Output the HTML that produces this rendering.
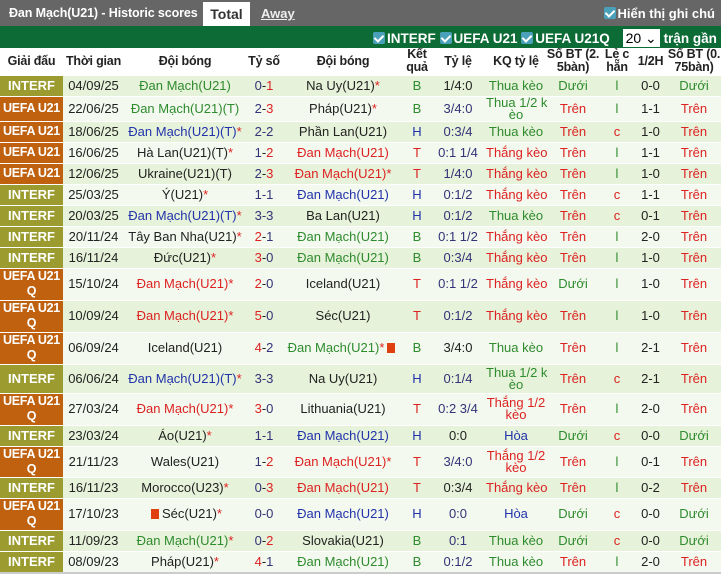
<!DOCTYPE html>
<html><head><meta charset="utf-8">
<style>
*{margin:0;padding:0;box-sizing:border-box}
html,body{overflow:hidden}
body{width:721px;height:574px;background:#fff;font-family:"Liberation Sans",Arial,sans-serif;font-size:13px;color:#222}
.top{height:26px;background:#666;position:relative;color:#fff;font-weight:bold;font-size:13px}
.top .t{position:absolute;left:9px;top:6px;font-size:12.5px;letter-spacing:-0.1px}
.top .tot{position:absolute;left:203px;top:2px;width:47px;height:24px;background:#fff;color:#333;text-align:center;padding-top:4px;font-size:14px}
.top .aw{position:absolute;left:261px;top:6px;text-decoration:underline;color:#eee}
.top .sh{position:absolute;right:6px;top:6px}
.cb{display:inline-block;width:12px;height:12px;background:#4aa0b8;border-radius:2px;vertical-align:-1px;margin-right:2px;position:relative}
.cb:after{content:"";position:absolute;left:3px;top:1px;width:4px;height:7px;border:solid #fff;border-width:0 2px 2px 0;transform:rotate(45deg)}
.gb{height:22px;background:#0d6b36;color:#fff;font-weight:bold;position:relative;white-space:nowrap;font-size:13.5px;overflow:hidden}
.gb .f{position:absolute;left:373px;top:3px}
.sel{display:inline-block;background:#fff;color:#000;font-weight:normal;width:37px;height:18px;padding:1px 3px;margin:0 4px 0 9px;font-size:14px}
table{border-collapse:collapse;table-layout:fixed;width:721px}
th{height:27px;font-weight:bold;font-size:12.5px;color:#222;line-height:13px;background:#fff;white-space:nowrap;overflow:visible;letter-spacing:-0.2px}
td{text-align:center;font-size:13px;border-top:1px solid #fff;line-height:12px;overflow:visible;white-space:nowrap}
tr.a td{background:#e6f2d9}
tr.b td{background:#f3f9ee}
td.i{background:#9b9b30!important;color:#fff;font-weight:bold;font-size:13px}
td.u{background:#bf610f!important;color:#fff;font-weight:bold;font-size:12.5px;line-height:15px;letter-spacing:-0.3px}
.g{color:#2e8b2e}.r{color:#dd2222}.bl{color:#2233aa}.o{color:#333377}
.s{color:#dd2222}
.rc{display:inline-block;width:8px;height:10px;background:#e04010;vertical-align:-1px;margin:0 3px}
</style></head><body>
<div class="top"><span class="t">Đan Mạch(U21) - Historic scores</span><span class="tot">Total</span><span class="aw">Away</span><span class="sh"><span class="cb"></span>Hiển thị ghi chú</span></div>
<div class="gb"><span class="f"><span class="cb"></span>INTERF <span class="cb"></span>UEFA U21 <span class="cb"></span>UEFA U21Q <span class="sel">20 ⌄</span>trận gần nhất</span></div>
<table>
<colgroup><col style="width:63px"><col style="width:61px"><col style="width:122px"><col style="width:36px"><col style="width:122px"><col style="width:26px"><col style="width:56px"><col style="width:60px"><col style="width:54px"><col style="width:34px"><col style="width:33px"><col style="width:54px"></colgroup>
<tr><th>Giải đấu</th><th>Thời gian</th><th>Đội bóng</th><th>Tỷ số</th><th>Đội bóng</th><th>Kết<br>quả</th><th>Tỷ lệ</th><th>KQ tỷ lệ</th><th>Số BT (2.<br>5bàn)</th><th>Lẻ c<br>hẵn</th><th>1/2H</th><th>Số BT (0.<br>75bàn)</th></tr>
<tr class="a" style="height:21px"><td class="i">INTERF</td><td>04/09/25</td><td class="g">Đan Mạch(U21)</td><td><span class="o">0</span>-<span class="r">1</span></td><td>Na Uy(U21)<span class="s">*</span></td><td class="g">B</td><td>1/4:0</td><td class="g">Thua kèo</td><td class="g">Dưới</td><td class="g">l</td><td>0-0</td><td class="g">Dưới</td></tr>
<tr class="b" style="height:25px"><td class="u">UEFA U21</td><td>22/06/25</td><td class="g">Đan Mạch(U21)(T)</td><td><span class="o">2</span>-<span class="r">3</span></td><td>Pháp(U21)<span class="s">*</span></td><td class="g">B</td><td class="o">3/4:0</td><td class="g">Thua 1/2 k<br>èo</td><td class="r">Trên</td><td class="g">l</td><td>1-1</td><td class="r">Trên</td></tr>
<tr class="a" style="height:21px"><td class="u">UEFA U21</td><td>18/06/25</td><td class="bl">Đan Mạch(U21)(T)<span class="s">*</span></td><td class="o">2-2</td><td>Phần Lan(U21)</td><td class="bl">H</td><td class="o">0:3/4</td><td class="g">Thua kèo</td><td class="r">Trên</td><td class="r">c</td><td>1-0</td><td class="r">Trên</td></tr>
<tr class="b" style="height:21px"><td class="u">UEFA U21</td><td>16/06/25</td><td>Hà Lan(U21)(T)<span class="s">*</span></td><td><span class="o">1</span>-<span class="r">2</span></td><td class="r">Đan Mạch(U21)</td><td class="r">T</td><td class="o">0:1 1/4</td><td class="r">Thắng kèo</td><td class="r">Trên</td><td class="g">l</td><td>1-1</td><td class="r">Trên</td></tr>
<tr class="a" style="height:21px"><td class="u">UEFA U21</td><td>12/06/25</td><td>Ukraine(U21)(T)</td><td><span class="o">2</span>-<span class="r">3</span></td><td class="r">Đan Mạch(U21)*</td><td class="r">T</td><td class="o">1/4:0</td><td class="r">Thắng kèo</td><td class="r">Trên</td><td class="g">l</td><td>1-0</td><td class="r">Trên</td></tr>
<tr class="b" style="height:21px"><td class="i">INTERF</td><td>25/03/25</td><td>Ý(U21)<span class="s">*</span></td><td class="o">1-1</td><td class="bl">Đan Mạch(U21)</td><td class="bl">H</td><td class="o">0:1/2</td><td class="r">Thắng kèo</td><td class="r">Trên</td><td class="r">c</td><td>1-1</td><td class="r">Trên</td></tr>
<tr class="a" style="height:21px"><td class="i">INTERF</td><td>20/03/25</td><td class="bl">Đan Mạch(U21)(T)<span class="s">*</span></td><td class="o">3-3</td><td>Ba Lan(U21)</td><td class="bl">H</td><td class="o">0:1/2</td><td class="g">Thua kèo</td><td class="r">Trên</td><td class="r">c</td><td>0-1</td><td class="r">Trên</td></tr>
<tr class="b" style="height:21px"><td class="i">INTERF</td><td>20/11/24</td><td>Tây Ban Nha(U21)<span class="s">*</span></td><td><span class="r">2</span>-<span class="o">1</span></td><td class="g">Đan Mạch(U21)</td><td class="g">B</td><td class="o">0:1 1/2</td><td class="r">Thắng kèo</td><td class="r">Trên</td><td class="g">l</td><td>2-0</td><td class="r">Trên</td></tr>
<tr class="a" style="height:21px"><td class="i">INTERF</td><td>16/11/24</td><td>Đức(U21)<span class="s">*</span></td><td><span class="r">3</span>-<span class="o">0</span></td><td class="g">Đan Mạch(U21)</td><td class="g">B</td><td class="o">0:3/4</td><td class="r">Thắng kèo</td><td class="r">Trên</td><td class="g">l</td><td>1-0</td><td class="r">Trên</td></tr>
<tr class="b" style="height:32px"><td class="u">UEFA U21<br>Q</td><td>15/10/24</td><td class="r">Đan Mạch(U21)*</td><td><span class="r">2</span>-<span class="o">0</span></td><td>Iceland(U21)</td><td class="r">T</td><td class="o">0:1 1/2</td><td class="r">Thắng kèo</td><td class="g">Dưới</td><td class="g">l</td><td>1-0</td><td class="r">Trên</td></tr>
<tr class="a" style="height:32px"><td class="u">UEFA U21<br>Q</td><td>10/09/24</td><td class="r">Đan Mạch(U21)*</td><td><span class="r">5</span>-<span class="o">0</span></td><td>Séc(U21)</td><td class="r">T</td><td class="o">0:1/2</td><td class="r">Thắng kèo</td><td class="r">Trên</td><td class="g">l</td><td>1-0</td><td class="r">Trên</td></tr>
<tr class="b" style="height:32px"><td class="u">UEFA U21<br>Q</td><td>06/09/24</td><td>Iceland(U21)</td><td><span class="r">4</span>-<span class="o">2</span></td><td class="g">Đan Mạch(U21)<span class="s">*</span><span class="rc"></span></td><td class="g">B</td><td>3/4:0</td><td class="g">Thua kèo</td><td class="r">Trên</td><td class="g">l</td><td>2-1</td><td class="r">Trên</td></tr>
<tr class="a" style="height:29px"><td class="i">INTERF</td><td>06/06/24</td><td class="bl">Đan Mạch(U21)(T)<span class="s">*</span></td><td class="o">3-3</td><td>Na Uy(U21)</td><td class="bl">H</td><td class="o">0:1/4</td><td class="g">Thua 1/2 k<br>èo</td><td class="r">Trên</td><td class="r">c</td><td>2-1</td><td class="r">Trên</td></tr>
<tr class="b" style="height:32px"><td class="u">UEFA U21<br>Q</td><td>27/03/24</td><td class="r">Đan Mạch(U21)*</td><td><span class="r">3</span>-<span class="o">0</span></td><td>Lithuania(U21)</td><td class="r">T</td><td class="o">0:2 3/4</td><td class="r">Thắng 1/2<br>kèo</td><td class="r">Trên</td><td class="g">l</td><td>2-0</td><td class="r">Trên</td></tr>
<tr class="a" style="height:21px"><td class="i">INTERF</td><td>23/03/24</td><td>Áo(U21)<span class="s">*</span></td><td class="o">1-1</td><td class="bl">Đan Mạch(U21)</td><td class="bl">H</td><td>0:0</td><td class="bl">Hòa</td><td class="g">Dưới</td><td class="r">c</td><td>0-0</td><td class="g">Dưới</td></tr>
<tr class="b" style="height:31px"><td class="u">UEFA U21<br>Q</td><td>21/11/23</td><td>Wales(U21)</td><td><span class="o">1</span>-<span class="r">2</span></td><td class="r">Đan Mạch(U21)*</td><td class="r">T</td><td class="o">3/4:0</td><td class="r">Thắng 1/2<br>kèo</td><td class="r">Trên</td><td class="g">l</td><td>0-1</td><td class="r">Trên</td></tr>
<tr class="a" style="height:21px"><td class="i">INTERF</td><td>16/11/23</td><td>Morocco(U23)<span class="s">*</span></td><td><span class="o">0</span>-<span class="r">3</span></td><td class="r">Đan Mạch(U21)</td><td class="r">T</td><td>0:3/4</td><td class="r">Thắng kèo</td><td class="r">Trên</td><td class="g">l</td><td>0-2</td><td class="r">Trên</td></tr>
<tr class="b" style="height:32px"><td class="u">UEFA U21<br>Q</td><td>17/10/23</td><td><span class="rc"></span>Séc(U21)<span class="s">*</span></td><td class="o">0-0</td><td class="bl">Đan Mạch(U21)</td><td class="bl">H</td><td class="o">0:0</td><td class="bl">Hòa</td><td class="g">Dưới</td><td class="r">c</td><td>0-0</td><td class="g">Dưới</td></tr>
<tr class="a" style="height:21px"><td class="i">INTERF</td><td>11/09/23</td><td class="g">Đan Mạch(U21)<span class="s">*</span></td><td><span class="o">0</span>-<span class="r">2</span></td><td>Slovakia(U21)</td><td class="g">B</td><td class="o">0:1</td><td class="g">Thua kèo</td><td class="g">Dưới</td><td class="r">c</td><td>0-0</td><td class="g">Dưới</td></tr>
<tr class="b" style="height:21px"><td class="i">INTERF</td><td>08/09/23</td><td>Pháp(U21)<span class="s">*</span></td><td><span class="r">4</span>-<span class="o">1</span></td><td class="g">Đan Mạch(U21)</td><td class="g">B</td><td class="o">0:1/2</td><td class="g">Thua kèo</td><td class="r">Trên</td><td class="g">l</td><td>2-0</td><td class="r">Trên</td></tr>
</table>
<div style="height:2px;background:#ccc"></div>
</body></html>
